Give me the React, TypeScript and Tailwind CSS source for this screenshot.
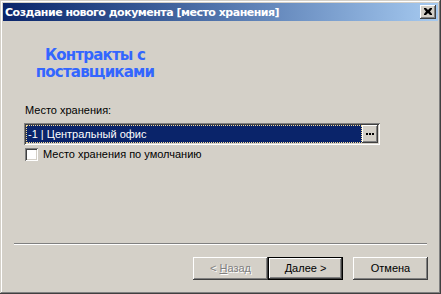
import React from "react";

const raised =
  "shadow-[inset_-1px_-1px_#404040,inset_1px_1px_#ffffff,inset_-2px_-2px_#808080,inset_2px_2px_#d4d0c8]";
const sunken =
  "shadow-[inset_1px_1px_#808080,inset_-1px_-1px_#ffffff,inset_2px_2px_#404040,inset_-2px_-2px_#d4d0c8]";

const WizardButton = ({
  children,
  disabled,
  isDefault,
}: {
  children: React.ReactNode;
  disabled?: boolean;
  isDefault?: boolean;
}) => (
  <div
    className={
      isDefault
        ? "w-[75px] h-[23px] border border-black bg-[#d4d0c8]"
        : "w-[75px] h-[23px] bg-[#d4d0c8] " + raised
    }
  >
    <div
      className={
        isDefault
          ? "w-full h-full flex items-center justify-center " + raised
          : "w-full h-full flex items-center justify-center"
      }
    >
      <span
        className={
          disabled
            ? "text-[11px] text-[#808080] [text-shadow:1px_1px_0_#ffffff]"
            : "text-[11px] text-black"
        }
      >
        {children}
      </span>
    </div>
  </div>
);

export default function App() {
  return (
    <div
      className={
        "w-[441px] h-[294px] bg-[#d4d0c8] p-[3px] flex flex-col font-['Liberation_Sans',Arial,sans-serif] " +
        "shadow-[inset_-1px_-1px_#404040,inset_1px_1px_#d4d0c8,inset_-2px_-2px_#808080,inset_2px_2px_#ffffff]"
      }
    >
      {/* title bar */}
      <div className="h-[18px] flex items-center justify-between pl-[2px] pr-[2px] bg-gradient-to-r from-[#0a246a] to-[#a6caf0]">
        <span className="text-white font-bold text-[11px] leading-none font-['DejaVu_Sans',sans-serif] tracking-[-0.5px]">
          Создание нового документа [место хранения]
        </span>
        <div className={"w-[16px] h-[14px] bg-[#d4d0c8] flex items-center justify-center " + raised}>
          <svg width="8" height="7" viewBox="0 0 8 7" className="-mt-[1px]">
            <path d="M0 0h2l2 2 2-2h2v1L6 3.5 8 6v1H6L4 5 2 7H0V6l2-2.5L0 1z" fill="#000" />
          </svg>
        </div>
      </div>

      {/* body */}
      <div className="flex-1 flex flex-col">
        <div className="mt-[26px] ml-[12px] w-[160px] text-center text-[#3366ff] font-bold text-[15px] leading-[17px] tracking-[-0.8px] font-['DejaVu_Sans',sans-serif]">
          Контракты с
          <br />
          поставщиками
        </div>

        <div className="mt-[23px] ml-[22px] text-[11px] leading-[13px] text-black">
          Место хранения:
        </div>

        <div className={"mt-[6px] ml-[21px] w-[356px] h-[22px] bg-white p-[2px] flex " + sunken}>
          <div className="flex-1 bg-[#0a246a] border border-dotted border-[#f5db95] flex items-center pl-[1px]">
            <span className="text-white text-[11px] leading-none">-1 | Центральный офис</span>
          </div>
          <div className={"w-[16px] bg-[#d4d0c8] flex items-center justify-center gap-[1px] " + raised}>
            <div className="w-[2px] h-[2px] bg-black" />
            <div className="w-[2px] h-[2px] bg-black" />
            <div className="w-[2px] h-[2px] bg-black" />
          </div>
        </div>

        <div className="mt-[3px] ml-[22px] flex items-center gap-[5px]">
          <div className={"w-[13px] h-[13px] bg-white " + sunken} />
          <span className="text-[11px] leading-[13px] text-black">Место хранения по умолчанию</span>
        </div>

        <div className="mt-auto mx-[11px] mr-[11px] h-[2px] border-t border-t-[#808080] border-b border-b-white" />

        <div className="mt-[12px] mb-[11px] flex justify-end pr-[10px]">
          <WizardButton disabled>
            &lt; <span className="underline">Н</span>азад
          </WizardButton>
          <WizardButton isDefault>
            <span className="underline">Д</span>алее &gt;
          </WizardButton>
          <div className="w-[10px]" />
          <WizardButton>Отмена</WizardButton>
        </div>
      </div>
    </div>
  );
}
